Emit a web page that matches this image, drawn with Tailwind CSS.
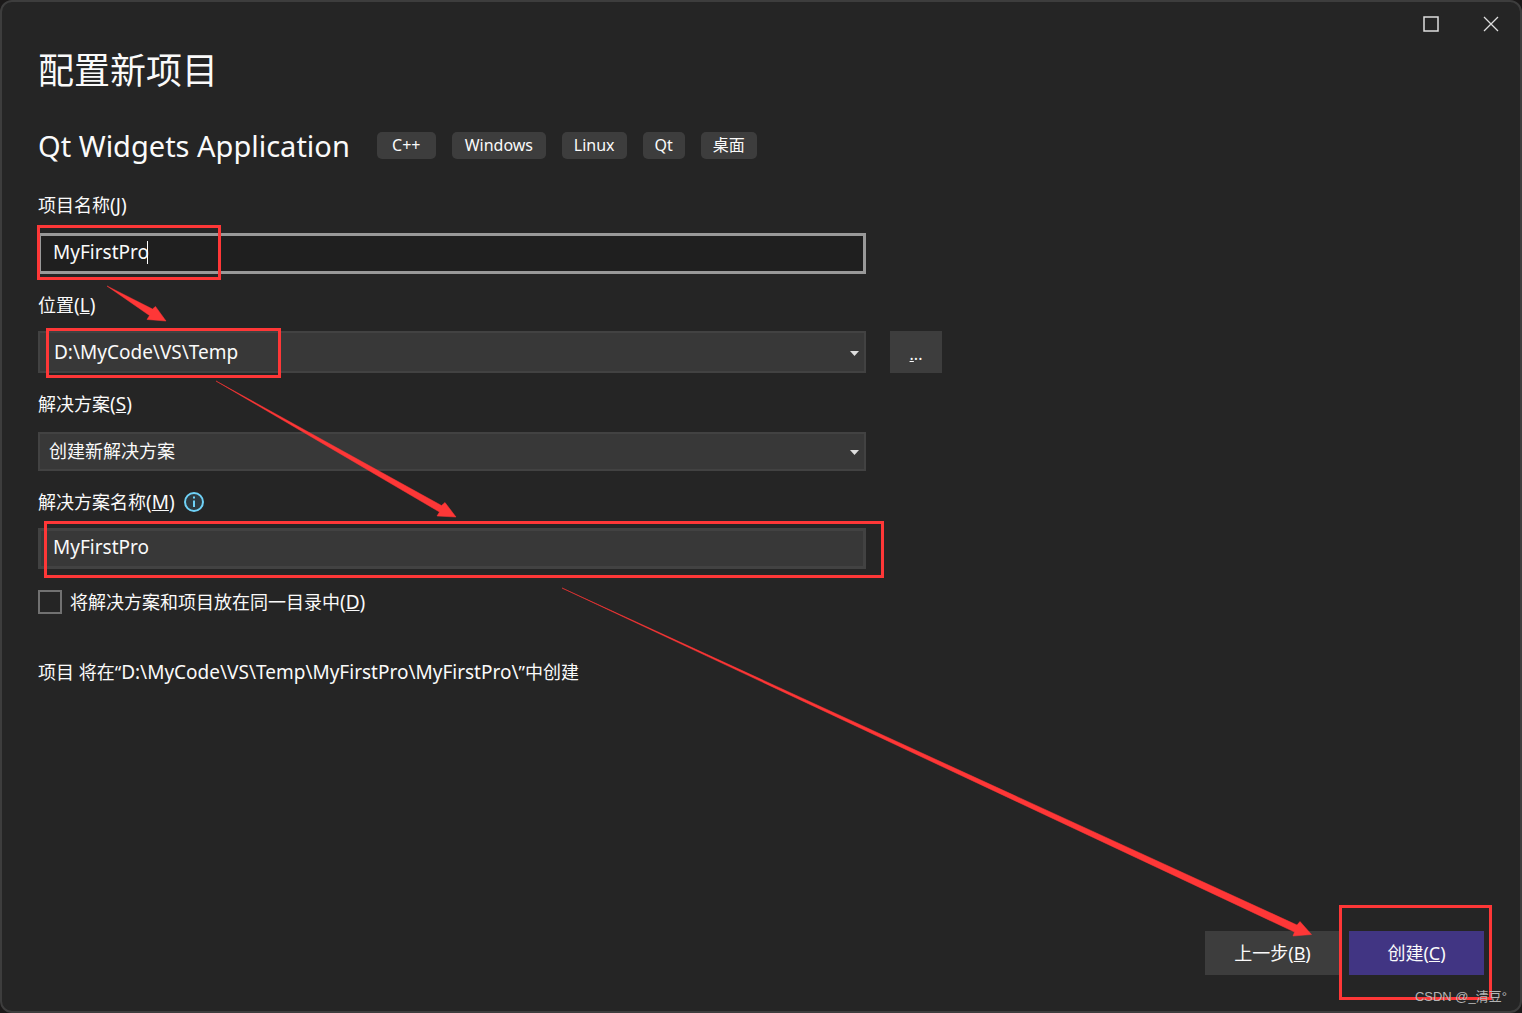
<!DOCTYPE html>
<html lang="zh-CN">
<head>
<meta charset="utf-8">
<meta name="viewport" content="width=device-width, initial-scale=1">
<title>配置新项目</title>
<script src="https://cdn.jsdelivr.net/npm/@tailwindcss/browser@4"></script>
</head>
<body class="bg-[#1b1919] font-['Noto_Sans','Noto_Sans_CJK_SC',sans-serif] text-[18px] leading-6 text-[#fafafa]">
<div class="relative flex min-h-screen flex-col rounded-xl border-2 border-[#3d3d3d] bg-[#252525]">

  <header class="-mr-px flex h-11 justify-end">
    <button type="button" aria-label="最大化" class="flex w-15 items-center justify-center">
      <svg class="size-4" viewBox="0 0 16 16" fill="none" stroke="#dedede" stroke-width="1.5"><rect x="1" y="1" width="14" height="14"/></svg>
    </button>
    <button type="button" aria-label="关闭" class="flex w-15 items-center justify-center">
      <svg class="size-4" viewBox="0 0 16 16" fill="none" stroke="#dedede" stroke-width="1.3"><path d="M1 1l14 14M15 1L1 15"/></svg>
    </button>
  </header>

  <main class="flex-1 px-9">
    <h1 class="pt-px text-[36px] leading-12">配置新项目</h1>

    <div class="mt-[31px] flex h-10 items-center">
      <h2 class="mr-[27px] text-[29px] leading-10">Qt Widgets Application</h2>
      <ul class="mb-0.5 flex gap-4 text-center text-[16px] leading-[27px]">
        <li class="min-w-[59px] rounded-[5px] bg-[#3d3d3d] px-3">C++</li>
        <li class="min-w-[94px] rounded-[5px] bg-[#3d3d3d] px-3">Windows</li>
        <li class="rounded-[5px] bg-[#3d3d3d] px-3">Linux</li>
        <li class="rounded-[5px] bg-[#3d3d3d] px-3">Qt</li>
        <li class="rounded-[5px] bg-[#3d3d3d] px-3">桌面</li>
      </ul>
    </div>

    <form class="mt-[27px]">
      <div class="max-w-[828px]">
        <label for="name" class="mb-4 block h-6">项目名称<span class="text-[19px]">(<u>J</u>)</span></label>
        <div class="relative">
          <input id="name" type="text" value="MyFirstPro" class="block h-[41px] w-full border-3 border-[#999999] bg-[#1f1f1f] px-3 pb-1 text-[19px] outline-none">
          <span class="absolute top-2 left-[109px] h-[23px] w-px bg-white"></span>
          <span class="pointer-events-none absolute -top-2 -left-px h-[55px] w-[184px] border-3 border-[#fe3737]"></span>
        </div>
      </div>

      <div class="mt-[19px]">
        <label for="location" class="mb-[14px] block h-6">位置<span class="text-[19px]">(<u>L</u>)</span></label>
        <div class="flex gap-6">
          <div class="relative max-w-[828px] flex-1">
            <select id="location" class="block h-[42px] w-full appearance-none border-2 border-[#424242] bg-[#383838] px-[14px] text-[19px]"><option>D:\MyCode\VS\Temp</option></select>
            <svg class="pointer-events-none absolute top-5 right-[7px] h-[5px] w-[9px]" viewBox="0 0 9 5" fill="#dedede"><path d="M0 0h9L4.500 5z"/></svg>
            <span class="pointer-events-none absolute -top-[3px] left-2 h-[50px] w-[235px] border-3 border-[#fe3737]"></span>
          </div>
          <button type="button" aria-label="浏览" class="h-[42px] w-13 bg-[#3d3d3d] pt-1 text-[16px]"><u>.</u>..</button>
        </div>
      </div>

      <div class="mt-[19px] max-w-[828px]">
        <label for="solution" class="mb-4 block h-6">解决方案<span class="text-[19px]">(<u>S</u>)</span></label>
        <div class="relative">
          <select id="solution" class="block h-[39px] w-full appearance-none border-2 border-[#424242] bg-[#383838] px-[9px] pb-0.5"><option>创建新解决方案</option></select>
          <svg class="pointer-events-none absolute top-[18px] right-[7px] h-[5px] w-[9px]" viewBox="0 0 9 5" fill="#dedede"><path d="M0 0h9L4.500 5z"/></svg>
        </div>
      </div>

      <div class="mt-[19px] max-w-[828px]">
        <div class="mb-[14px] flex h-6 items-center gap-[9px]">
          <label for="solution-name" class="h-6">解决方案名称<span class="text-[19px]">(<u>M</u>)</span></label>
          <svg class="size-5" viewBox="0 0 20 20" fill="none"><circle cx="10" cy="10" r="9" fill="#2d3a40" stroke="#6fd2f7" stroke-width="2"/><path d="M9 4.500h2v2H9zM9 8.500h2v6.500H9z" fill="#6fd2f7"/></svg>
        </div>
        <div class="relative">
          <input id="solution-name" type="text" value="MyFirstPro" class="block h-[41px] w-full border-3 border-[#424242] bg-[#383838] px-3 pb-1 text-[19px] outline-none">
          <span class="pointer-events-none absolute -top-[7px] -right-[18px] left-[6px] h-[57px] border-3 border-[#fe3737]"></span>
        </div>
      </div>

      <div class="mt-[21px] flex h-6 items-center gap-2">
        <input id="same-dir" type="checkbox" class="size-6 appearance-none border-2 border-[#717171] bg-[#252525]">
        <label for="same-dir" class="h-6">将解决方案和项目放在同一目录中<span class="text-[19px]">(<u>D</u>)</span></label>
      </div>
    </form>

    <p class="mt-[46px]">项目 将在“<span class="text-[19px]">D:\MyCode\VS\Temp\MyFirstPro\MyFirstPro\</span>”中创建</p>
  </main>

  <footer class="flex justify-end gap-[9px] px-9 pb-9">
    <button type="button" class="h-11 w-[135px] bg-[#3d3d3d]">上一步(<u>B</u>)</button>
    <div class="relative">
      <button type="button" class="block h-11 w-[135px] bg-[#413583]">创建(<u>C</u>)</button>
      <span class="pointer-events-none absolute -top-[26px] -left-[10px] h-[95px] w-[153px] border-3 border-[#fe3737]"></span>
    </div>
  </footer>

  <svg class="pointer-events-none absolute -top-0.5 -left-0.5 h-[1013px] w-[1522px] max-w-none" viewBox="0 0 1522 1013" fill="#fe3737" aria-hidden="true">
    <path d="M107 286L152.500 309L155.500 306.500L166 321L147 319.500L149.500 315.500Z" stroke="#fe3737" stroke-width=".5"/>
    <path d="M216 381L441.500 505.500L445 502.500L456 517L437 516L439.500 512Z" stroke="#fe3737" stroke-width=".5"/>
    <path d="M562 588L1297 925L1300 921.500L1311.500 934.500L1293 936L1294.500 932Z" stroke="#fe3737" stroke-width=".5"/>
  </svg>

  <span class="absolute right-[13px] bottom-1 font-['Liberation_Sans','Noto_Sans_CJK_SC',sans-serif] text-[13px] leading-5 text-[#b4b4b4]">CSDN @_清豆°</span>
</div>
</body>
</html>
